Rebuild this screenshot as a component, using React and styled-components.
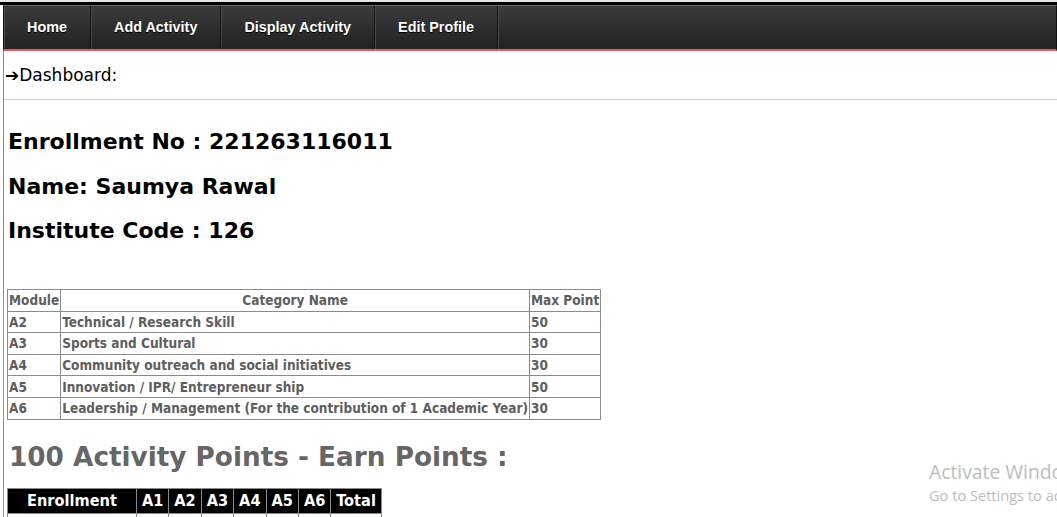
import React from "react";
import styled, {createGlobalStyle} from "styled-components";

const GlobalStyle = createGlobalStyle`
    html, body {
        margin: 0;
        padding: 0;
        background: #fff;
        overflow: hidden;
    }
    body {
        font-family: "DejaVu Sans", Verdana, sans-serif;
    }
`;

const modules = [
    {code: 'A2', name: 'Technical / Research Skill', max: 50},
    {code: 'A3', name: 'Sports and Cultural', max: 30},
    {code: 'A4', name: 'Community outreach and social initiatives', max: 30},
    {code: 'A5', name: 'Innovation / IPR/ Entrepreneur ship', max: 50},
    {code: 'A6', name: 'Leadership / Management (For the contribution of 1 Academic Year)', max: 30},
];

const navItems = ['Home', 'Add Activity', 'Display Activity', 'Edit Profile'];
const pointCols = ['Enrollment', 'A1', 'A2', 'A3', 'A4', 'A5', 'A6', 'Total'];

export default function App() {
    return (
        <Page>
            <GlobalStyle/>
            <TopStrip/>
            <Frame>
                <NavBar>
                    {navItems.map((item) => (
                        <NavItem key={item}>{item}</NavItem>
                    ))}
                    <NavFiller/>
                </NavBar>
                <Content>
                    <Crumb>➔Dashboard:</Crumb>
                    <Divider/>
                    <Info>
                        <InfoLine>Enrollment No : 221263116011</InfoLine>
                        <InfoLine>Name: Saumya Rawal</InfoLine>
                        <InfoLine>Institute Code : 126</InfoLine>
                    </Info>
                    <CategoryTable>
                        <thead>
                        <tr>
                            <CatCell as="th">Module</CatCell>
                            <CatCell as="th" center>Category Name</CatCell>
                            <CatCell as="th">Max Point</CatCell>
                        </tr>
                        </thead>
                        <tbody>
                        {modules.map((m) => (
                            <tr key={m.code}>
                                <CatCell>{m.code}</CatCell>
                                <CatCell>{m.name}</CatCell>
                                <CatCell>{m.max}</CatCell>
                            </tr>
                        ))}
                        </tbody>
                    </CategoryTable>
                    <PointsTitle>100 Activity Points - Earn Points :</PointsTitle>
                    <PointsTable>
                        <thead>
                        <tr>
                            {pointCols.map((c) => (
                                <PointsHead key={c} wide={c === 'Enrollment'}>{c}</PointsHead>
                            ))}
                        </tr>
                        </thead>
                        <tbody>
                        <tr>
                            {pointCols.map((c) => <PointsCell key={c}/>)}
                        </tr>
                        </tbody>
                    </PointsTable>
                </Content>
            </Frame>
            <Watermark>
                <WatermarkTitle>Activate Windows</WatermarkTitle>
                <WatermarkSub>Go to Settings to activate Windows.</WatermarkSub>
            </Watermark>
        </Page>
    )
}

const Page = styled.div`
    width: 1057px;
    height: 517px;
    overflow: hidden;
    position: relative;
    background: #fff;
`;

const TopStrip = styled.div`
    height: 2px;
    background: #e6e6e6;
    border-bottom: 3px solid #000;
`;

const Frame = styled.div`
    margin-left: 3px;
    border-left: 1px solid #e56a6a;
    min-height: 512px;
    display: flex;
    flex-direction: column;
`;

const NavBar = styled.div`
    display: flex;
    flex-shrink: 0;
    height: 43px;
    margin-left: -1px;
    background: linear-gradient(#3b3b3b, #222);
    border: 1px solid #111;
    border-top: 1px solid #6a6a6a;
    border-bottom: 2px solid #e35b5b;
`;

const NavItem = styled.div`
    display: flex;
    align-items: center;
    padding: 0 23px 2px;
    border-right: 1px solid #111;
    box-shadow: inset 1px 0 #4a4a4a;
    color: #fff;
    font-family: "Liberation Sans", Arial, sans-serif;
    font-weight: bold;
    font-size: 14.4px;
    text-shadow: 0 1px 1px #000;
    white-space: nowrap;
`;

const NavFiller = styled.div`
    flex: 1;
    box-shadow: inset 1px 0 #4a4a4a;
`;

const Content = styled.div`
    display: flex;
    flex-direction: column;
    align-items: flex-start;
`;

const Crumb = styled.div`
    font-family: "DejaVu Sans", Verdana, sans-serif;
    font-size: 17px;
    color: #000;
    padding: 14px 0 0 1px;
    height: 35px;
    box-sizing: border-box;
`;

const Divider = styled.div`
    align-self: stretch;
    border-top: 1px solid #cfcfcf;
    margin-top: 13px;
`;

const Info = styled.div`
    display: flex;
    flex-direction: column;
    gap: 18.5px;
    padding: 29px 0 0 4px;
`;

const InfoLine = styled.h2`
    margin: 0;
    font-family: "DejaVu Sans", Verdana, sans-serif;
    font-size: 22px;
    font-weight: bold;
    line-height: 26px;
    color: #000;
`;

const CategoryTable = styled.table`
    border-collapse: collapse;
    margin: 45px 0 0 3px;
    border: 1px solid #8a8a8a;
`;

const CatCell = styled.td`
    border: 1px solid #8a8a8a;
    font-family: "DejaVu Sans Condensed", Tahoma, sans-serif;
    font-size: 13.5px;
    font-weight: bold;
    color: #5e5e5e;
    height: 20.6px;
    padding: 0 1px;
    text-align: ${props => props.center ? 'center' : 'left'};
    white-space: nowrap;
`;

const PointsTitle = styled.h1`
    margin: 21px 0 0 5px;
    font-family: "DejaVu Sans", Verdana, sans-serif;
    font-size: 26.3px;
    font-weight: bold;
    line-height: 32px;
    color: #666;
`;

const PointsTable = styled.table`
    border-collapse: collapse;
    margin: 15px 0 0 3px;
`;

const PointsHead = styled.th`
    background: #000;
    color: #fff;
    border: 1px solid #8a8a8a;
    font-family: "DejaVu Sans Condensed", Tahoma, sans-serif;
    font-size: 16.2px;
    font-weight: bold;
    height: 24px;
    padding: 0 ${props => props.wide ? '19px' : '5px'};
`;

const PointsCell = styled.td`
    border: 1px solid #8a8a8a;
    height: 24px;
`;

const Watermark = styled.div`
    position: absolute;
    left: 929px;
    top: 459px;
    white-space: nowrap;
    color: #bdbdbd;
    font-family: "Open Sans", "Noto Sans", sans-serif;
`;

const WatermarkTitle = styled.div`
    font-size: 19.3px;
    line-height: 26px;
`;

const WatermarkSub = styled.div`
    font-size: 14.6px;
    line-height: 20px;
`;
